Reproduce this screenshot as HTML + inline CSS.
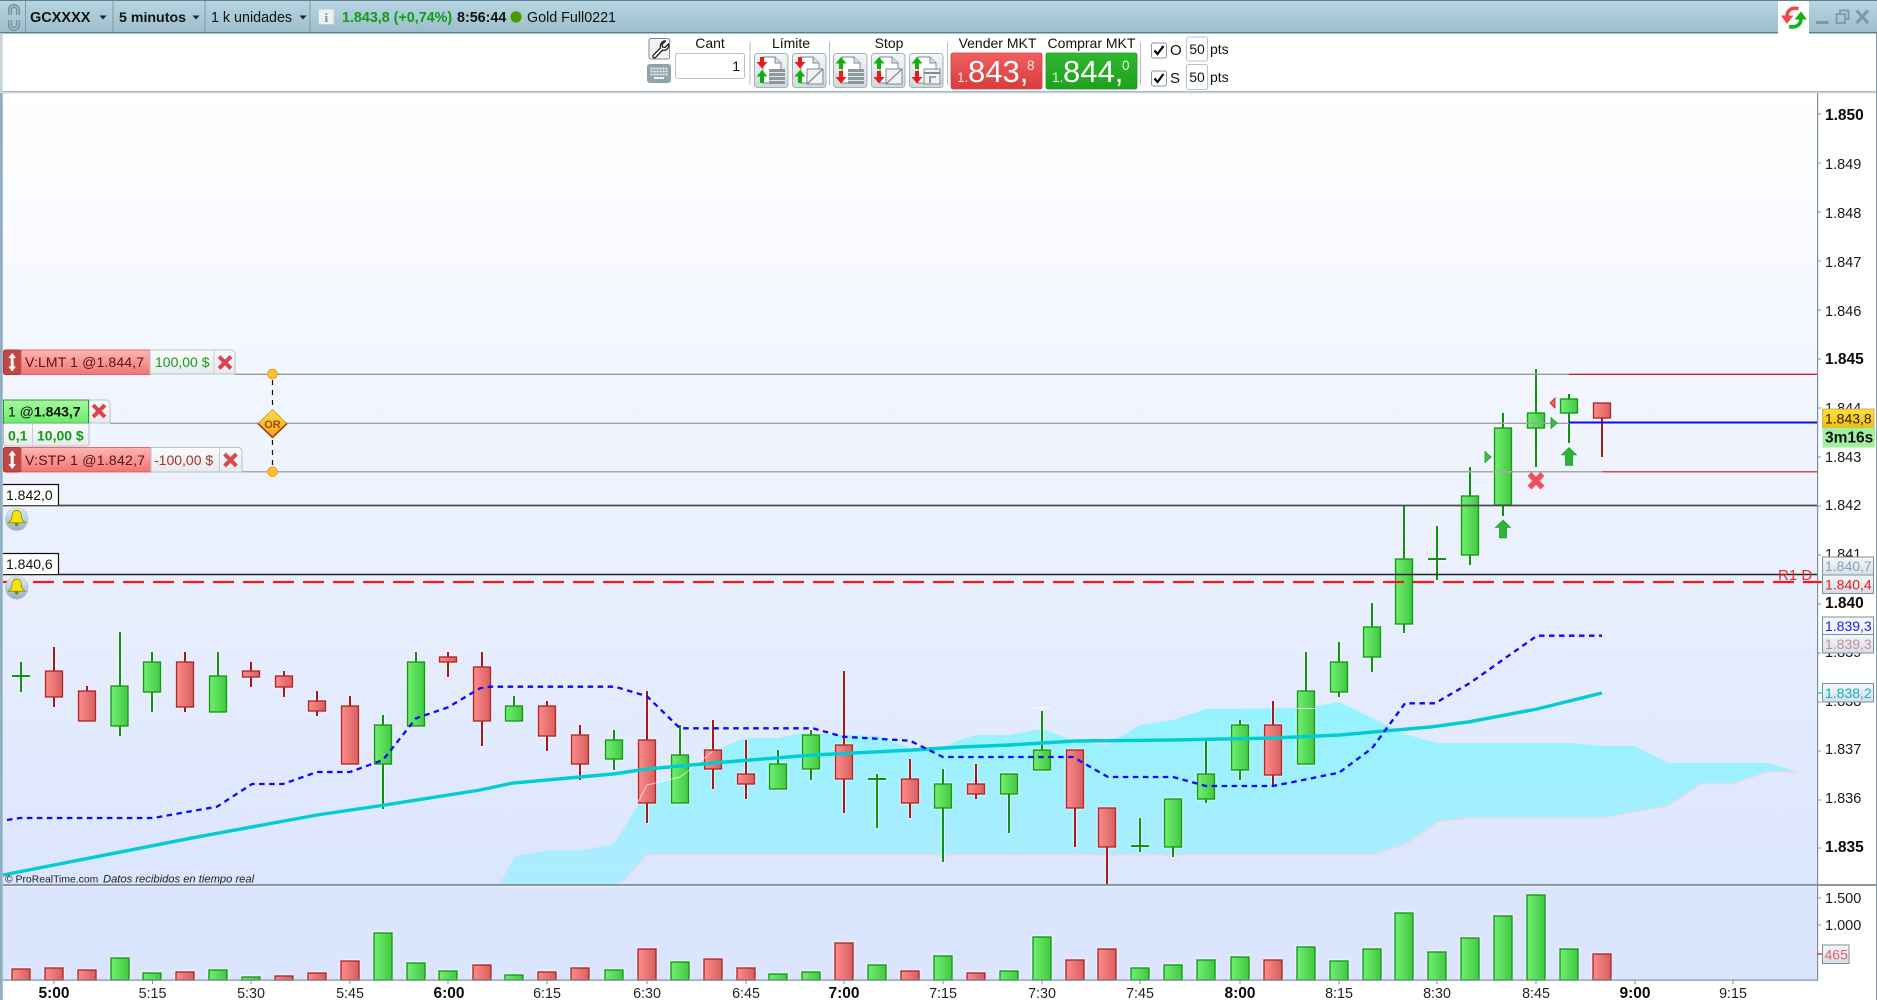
<!DOCTYPE html>
<html lang="es"><head><meta charset="utf-8"><title>GCXXXX</title>
<style>
html,body{margin:0;padding:0;width:1877px;height:1000px;overflow:hidden;background:#fff}
svg{display:block}
text{font-family:"Liberation Sans",sans-serif;font-size:14px;fill:#111}
.b{font-weight:bold}
.c{text-anchor:middle}
.ax{font-size:14.5px;fill:#1a1a1a}
.axb{font-size:15.5px;font-weight:bold;fill:#0a0a0a}
.t{font-size:14.3px;fill:#222;text-anchor:middle}
.tb{font-size:15.5px;font-weight:bold;fill:#0a0a0a;text-anchor:middle}
.h{filter:drop-shadow(0 0 .7px #fff) drop-shadow(0 0 .4px #fff)}
.gw{stroke:#0f930f;stroke-width:2;fill:none}
.rw{stroke:#a91818;stroke-width:2;fill:none}
.gb rect{fill:url(#gg);stroke:#16991a;stroke-width:1.4}
.rb rect{fill:url(#gr);stroke:#aa2c2c;stroke-width:1.4}
</style></head><body>
<svg width="1877" height="1000" viewBox="0 0 1877 1000" xmlns="http://www.w3.org/2000/svg">
<defs>
<linearGradient id="bar" x1="0" y1="0" x2="0" y2="1"><stop offset="0" stop-color="#b8d6e3"/><stop offset="1" stop-color="#9cbdcc"/></linearGradient>
<linearGradient id="bg" x1="0" y1="0" x2="0" y2="1"><stop offset="0" stop-color="#fff"/><stop offset="1" stop-color="#dbe5fe"/></linearGradient>
<linearGradient id="gg" x1="0" y1="0" x2="1" y2="0"><stop offset="0" stop-color="#70f070"/><stop offset="1" stop-color="#42c842"/></linearGradient>
<linearGradient id="gr" x1="0" y1="0" x2="1" y2="0"><stop offset="0" stop-color="#ff8c8c"/><stop offset="1" stop-color="#d65e5e"/></linearGradient>
<linearGradient id="cl" x1="0" y1="0" x2="0" y2="1"><stop offset="0" stop-color="#95f3ff"/><stop offset="1" stop-color="#aeecff"/></linearGradient>
<linearGradient id="tr" x1="0" y1="0" x2="0" y2="1"><stop offset="0" stop-color="#ffb4b4"/><stop offset="1" stop-color="#f07676"/></linearGradient>
<linearGradient id="tg" x1="0" y1="0" x2="0" y2="1"><stop offset="0" stop-color="#a8f7a0"/><stop offset="1" stop-color="#68ec68"/></linearGradient>
<linearGradient id="tw" x1="0" y1="0" x2="0" y2="1"><stop offset="0" stop-color="#fbfcfc"/><stop offset="1" stop-color="#e6eaec"/></linearGradient>
<linearGradient id="btn" x1="0" y1="0" x2="0" y2="1"><stop offset="0" stop-color="#f4f7f8"/><stop offset="1" stop-color="#cfd8dc"/></linearGradient>
<linearGradient id="sell" x1="0" y1="0" x2="0" y2="1"><stop offset="0" stop-color="#ef6060"/><stop offset="1" stop-color="#d83c3c"/></linearGradient>
<linearGradient id="buy" x1="0" y1="0" x2="0" y2="1"><stop offset="0" stop-color="#2fb92f"/><stop offset="1" stop-color="#1fa01f"/></linearGradient>
<linearGradient id="box" x1="0" y1="0" x2="0" y2="1"><stop offset="0" stop-color="#f4f7fb"/><stop offset="1" stop-color="#d6deea"/></linearGradient>
<linearGradient id="yel" x1="0" y1="0" x2="0" y2="1"><stop offset="0" stop-color="#ffdf40"/><stop offset="1" stop-color="#f8bd00"/></linearGradient>
<linearGradient id="dia" x1="0" y1="0" x2="0" y2="1"><stop offset="0" stop-color="#ffe050"/><stop offset="1" stop-color="#f0a010"/></linearGradient>
<linearGradient id="bl" x1="0" y1="0" x2="0" y2="1"><stop offset="0" stop-color="#e2eef6"/><stop offset="1" stop-color="#8eb0c6"/></linearGradient>
<g id="base"><rect x=".5" y=".5" width="33.5" height="34" rx="3" fill="url(#btn)" stroke="#a2b0b8"/><path d="M9 4H21L27 10V30H9Z" fill="#fff" stroke="#7d8a90"/><path d="M21 4V10H27" fill="#dde" stroke="#7d8a90"/></g>
<g id="a1"><polygon points="6,4 10,4 10,9 13.5,9 8,15.5 2.5,9 6,9" fill="#e81c1c"/><polygon points="8,17 13.5,23.5 10,23.5 10,30 6,30 6,23.5 2.5,23.5" fill="#10b010"/></g>
<g id="a2"><polygon points="8,4 13.5,10.5 10,10.5 10,16 6,16 6,10.5 2.5,10.5" fill="#10b010"/><polygon points="6,18 10,18 10,24 13.5,24 8,30.5 2.5,24 6,24" fill="#e81c1c"/></g>
<g id="ls"><rect x="15" y="16" width="16" height="15" fill="#8c989c"/><path d="M15 19.5H31M15 23.5H31M15 27.5H31" stroke="#e4e8ea" stroke-width="1"/></g>
<g id="dg"><rect x="15" y="16" width="16" height="15" fill="#f0f2f3" stroke="#7d8a90"/><path d="M15 31L31 16" stroke="#7d8a90" stroke-width="1.2"/></g>
<g id="trl"><rect x="15" y="16" width="16" height="15" fill="#f0f2f3" stroke="#7d8a90"/><path d="M15 20H31" stroke="#7d8a90" stroke-width="2"/><path d="M21 30V24H27" fill="none" stroke="#7d8a90" stroke-width="1.6"/></g>
<g id="grip"><rect x="3.5" y="0" width="17.5" height="24.5" rx="2" fill="#c24646" stroke="#b03434"/><path d="M12.2 3L16 8H13.7V16.5H16L12.2 21.5L8.4 16.5H10.7V8H8.4Z" fill="#fff"/></g>
<g id="bell"><circle cx="0" cy="0" r="11.3" fill="url(#bl)" stroke="#a8c0d0" stroke-width=".6"/><path d="M0-9c-3.2 0-4.7 2.6-4.7 6 0 3-1.6 5-3.6 6.5H8.300C6.300 2 4.700 0 4.700-3 4.700-6.400 3.200-9 0-9Z" fill="#f4e400" stroke="#9a8c00" stroke-width=".9"/><circle cx="0" cy="5" r="1.7" fill="#8a7a00"/></g>
<g id="ar"><polygon points="0,-9 7.600,-1.500 3.600,-1.500 3.600,9 -3.600,9 -3.600,-1.500 -7.600,-1.500" fill="#2eb43a" stroke="#1c8f28" stroke-width=".6"/></g>
</defs>

<!-- backgrounds -->
<rect width="1877" height="1000" fill="#fff"/>
<rect x="3" y="93" width="1814" height="793" fill="url(#bg)"/>
<rect x="3" y="886" width="1814" height="94" fill="#dbe5fe"/>

<!-- top bar -->
<rect x="0" y="0" width="1877" height="33" fill="url(#bar)"/>
<rect x="0" y="0" width="1877" height="1" fill="#5f7f90"/>
<rect x="0" y="32" width="1877" height="1.500" fill="#5f7f90"/>
<path d="M25.500 1V32M113 1V32M205 1V32M310 1V32" stroke="#7d9cab" stroke-width="1"/>
<path d="M10 15V10a4 4 0 0 1 8 0V15M10 20V25a4 4 0 0 0 8 0V20" fill="none" stroke="#7c919b" stroke-width="4.200"/>
<path d="M10 15V10a4 4 0 0 1 8 0V15M10 20V25a4 4 0 0 0 8 0V20" fill="none" stroke="#b5cdd9" stroke-width="1.100"/>
<text class="b" x="30" y="22" style="font-size:14.5px">GCXXXX</text>
<polygon points="99.500,15.500 106.500,15.500 103,19.500" fill="#222"/>
<text class="b" x="119" y="22" style="font-size:14.2px">5 minutos</text>
<polygon points="192.500,15.500 199.500,15.500 196,19.500" fill="#222"/>
<text x="211" y="22" style="font-size:14.3px">1 k unidades</text>
<polygon points="299.500,15.500 306.500,15.500 303,19.500" fill="#222"/>
<rect x="318.500" y="9" width="15.500" height="15.500" fill="#eef2f3" stroke="#c2cbd0"/>
<text class="b c" x="326.300" y="22" style="font-family:'Liberation Serif',serif;font-size:13px;fill:#7c8a90">i</text>
<text class="b" x="342" y="22" style="font-size:14.3px;fill:#0f9c14">1.843,8 (+0,74%)</text>
<text class="b" x="457" y="22" style="font-size:14.3px">8:56:44</text>
<circle cx="516" cy="17" r="6" fill="#4b9a04" stroke="#a8ccb0" stroke-width=".8"/>
<text x="527" y="22" style="font-size:14.3px">Gold Full0221</text>

<!-- refresh tab + window buttons -->
<rect x="1778" y="1" width="31" height="32.500" fill="#fff"/>
<path d="M1798.500 9C1792.500 6.500 1787 10 1787 16.500" fill="none" stroke="#ee4a4a" stroke-width="3.600"/>
<polygon points="1781,15.500 1793.500,15.500 1787,24" fill="#ee4a4a"/>
<path d="M1789 26.500C1796 28 1801 25 1801 18.500" fill="none" stroke="#12b012" stroke-width="3.600"/>
<polygon points="1794.500,19.500 1807,19.500 1801,11.500" fill="#12b012"/>
<rect x="1816" y="21" width="12.500" height="3" fill="#7e97a3"/>
<path d="M1840 14V10.500H1848.500V19H1845M1836.500 14H1845V23H1836.500Z" fill="none" stroke="#7e97a3" stroke-width="1.800"/>
<path d="M1856.500 10.500L1868 23M1868 10.500L1856.500 23" stroke="#7e97a3" stroke-width="3"/>

<!-- toolbar -->
<rect x="0" y="91" width="1877" height="1.500" fill="#aebcc4"/>
<rect x="0" y="33" width="2.700" height="60" fill="#c8d4da"/>
<rect x="649" y="38.500" width="20.500" height="20.500" rx="2" fill="#f2f4f5" stroke="#7f8c92"/>
<path d="M665.500 41l-3.500 3.500.5 2.500 2.500.5 3.500-3.500c.8 3.500-1.500 7-6 6.200l-7 7.300c-1.500 1.200-3.300-.6-2.300-2.300l7.200-7.200c-.8-4.500 2.600-7.800 5.600-7z" fill="#fff" stroke="#222" stroke-width="1.300"/>
<rect x="647" y="64" width="24" height="19" rx="3" fill="#8ea4ac"/>
<path d="M650.500 68.500h17M650.500 71.500h17M650.500 74.500h17" stroke="#eef2f4" stroke-width="1.800" stroke-dasharray="2 1"/>
<rect x="654" y="77" width="10" height="2" fill="#eef2f4"/>
<text class="c" x="710" y="48">Cant</text>
<rect x="675.500" y="53.500" width="69" height="25" rx="2" fill="#fff" stroke="#b6c3c9"/>
<text x="740" y="71" style="text-anchor:end">1</text>
<path d="M750 42V85M829.500 42V85M947.500 42V85M1140.500 42V85" stroke="#b4bec4" stroke-width="1"/>
<text class="c" x="791" y="48">Límite</text>
<text class="c" x="889" y="48">Stop</text>
<g transform="translate(754 53)"><use href="#base"/><use href="#ls"/><use href="#a1"/></g>
<g transform="translate(792 53)"><use href="#base"/><use href="#dg"/><use href="#a1"/></g>
<g transform="translate(833 53)"><use href="#base"/><use href="#ls"/><use href="#a2"/></g>
<g transform="translate(871 53)"><use href="#base"/><use href="#dg"/><use href="#a2"/></g>
<g transform="translate(909 53)"><use href="#base"/><use href="#trl"/><use href="#a2"/></g>
<text class="c" x="997.500" y="48">Vender MKT</text>
<text class="c" x="1091.500" y="48">Comprar MKT</text>
<rect x="951" y="53" width="91" height="36" rx="2" fill="url(#sell)" stroke="#c84848" stroke-width=".8"/>
<rect x="1046" y="53" width="91" height="36" rx="2" fill="url(#buy)" stroke="#1c9a1c" stroke-width=".8"/>
<text x="957" y="82" style="font-size:13.500px;fill:#ffdcdc">1.</text>
<text x="968" y="82" style="font-size:31px;fill:#fff">843,</text>
<text x="1027" y="70" style="font-size:13.500px;fill:#ffe4e4">8</text>
<text x="1052" y="82" style="font-size:13.500px;fill:#d8f8d8">1.</text>
<text x="1063" y="82" style="font-size:31px;fill:#fff">844,</text>
<text x="1122" y="70" style="font-size:13.500px;fill:#e4ffe4">0</text>
<rect x="1151.500" y="43" width="15" height="15" rx="2" fill="#fff" stroke="#8a98a0"/>
<path d="M1154.500 50.500l3 3.500 6-8" fill="none" stroke="#000" stroke-width="2.200"/>
<rect x="1151.500" y="71" width="15" height="15" rx="2" fill="#fff" stroke="#8a98a0"/>
<path d="M1154.500 78.500l3 3.500 6-8" fill="none" stroke="#000" stroke-width="2.200"/>
<text x="1170" y="55" style="font-size:15px">O</text><text x="1170" y="83" style="font-size:15px">S</text>
<rect x="1186.500" y="37" width="21" height="24" rx="2" fill="#fff" stroke="#b6c3c9"/>
<rect x="1186.500" y="64.500" width="21" height="25" rx="2" fill="#fff" stroke="#b6c3c9"/>
<text class="c" x="1197" y="54">50</text><text class="c" x="1197" y="82">50</text>
<text x="1210" y="54">pts</text><text x="1210" y="82">pts</text>
<rect x="0" y="92.500" width="1877" height="1" fill="#dfe6ea"/>

<!-- ichimoku cloud -->
<polygon fill="url(#cl)" points="499,885 515,856 548,850 582,850 614,844 640,802 647,785 680,777 692,768 713,751 745,738 778,738 803,733 845,735 878,736 910,748 943,747 960,740 976,735 1009,735 1042,729 1075,741 1107,745 1140,725 1173,720 1206,709 1306,708 1339,702 1372,718 1404,734 1437,743 1570,743 1602,746 1635,746 1668,763 1767,763 1799,772 1767,772 1733,784 1701,784 1668,806 1635,812 1602,818 1470,818 1438,822 1430,828 1404,845 1373,855 647,855 620,885"/>
<polyline fill="none" stroke="#f8d4da" stroke-width="1.200" points="620,885 647,855 1373,855 1404,845 1430,828 1438,822 1470,818 1602,818 1635,812 1668,806 1701,784 1733,784 1767,772 1799,772"/>

<!-- candles -->
<g class="h">
<path class="gw" d="M21 662V692M120 632V736M152 652V712M218 652V712M383 715V809M416 652V726M514 696V721M614 730V770M680 725V803M778 750V789M811 730V780M877 774V828M943 769V862M1009 774V833M1042 711V770M1140 818V852M1173 799V857M1206 740V803M1240 720V780M1306 652V764M1339 642V697M1372 603V672M1404 506V633M1437 526V580M1470 467V565M1503 413V516M1536 369V467M1569 394V443M12 676H30M868 779H886M1131 846H1149M1428 559H1446"/>
<path class="rw" d="M54 647V707M87 686V691M185 652V712M251 662V687M284 671V697M317 691V716M350 696V764M448 652V677M482 652V746M547 701V751M580 725V780M647 691V823M713 720V789M746 740V799M844 671V813M910 759V818M976 764V799M1075 750V847M1107 808V885M1273 701V785M1602 403V457"/>
<g class="gb">
<rect x="111" y="686" width="17" height="40"/><rect x="143.500" y="662" width="17" height="30"/><rect x="209.500" y="676" width="17" height="36"/><rect x="374.500" y="725" width="17" height="39"/><rect x="407.500" y="662" width="17" height="64"/><rect x="505.500" y="706" width="17" height="15"/><rect x="605.500" y="740" width="17" height="19"/><rect x="671.500" y="755" width="17" height="48"/><rect x="769.500" y="764" width="17" height="25"/><rect x="802.500" y="735" width="17" height="34"/><rect x="934.500" y="784" width="17" height="24"/><rect x="1000.500" y="774" width="17" height="20"/><rect x="1033.500" y="750" width="17" height="20"/><rect x="1164.500" y="799" width="17" height="48"/><rect x="1197.500" y="774" width="17" height="25"/><rect x="1231.500" y="725" width="17" height="45"/><rect x="1297.500" y="691" width="17" height="73"/><rect x="1330.500" y="662" width="17" height="30"/><rect x="1363.500" y="627" width="17" height="30"/><rect x="1395.500" y="559" width="17" height="65"/><rect x="1461.500" y="496" width="17" height="59"/><rect x="1494.500" y="428" width="17" height="77"/><rect x="1527.500" y="413" width="17" height="15"/><rect x="1560.500" y="399" width="17" height="14"/>
</g>
<g class="rb">
<rect x="45.500" y="671" width="17" height="26"/><rect x="78.500" y="691" width="17" height="30"/><rect x="176.500" y="662" width="17" height="45"/><rect x="242.500" y="671" width="17" height="6"/><rect x="275.500" y="676" width="17" height="11"/><rect x="308.500" y="701" width="17" height="10"/><rect x="341.500" y="706" width="17" height="58"/><rect x="439.500" y="657" width="17" height="5"/><rect x="473.500" y="667" width="17" height="54"/><rect x="538.500" y="706" width="17" height="30"/><rect x="571.500" y="735" width="17" height="29"/><rect x="638.500" y="740" width="17" height="63"/><rect x="704.500" y="750" width="17" height="19"/><rect x="737.500" y="774" width="17" height="10"/><rect x="835.500" y="745" width="17" height="34"/><rect x="901.500" y="779" width="17" height="24"/><rect x="967.500" y="784" width="17" height="10"/><rect x="1066.500" y="750" width="17" height="58"/><rect x="1098.500" y="808" width="17" height="39"/><rect x="1264.500" y="725" width="17" height="50"/><rect x="1593.500" y="403" width="17" height="15"/>
</g>
</g>
<polyline fill="none" stroke="#fff" stroke-opacity=".65" stroke-width="1" points="638,802 647,785 680,777 692,768 713,751"/>
<path d="M1033 708H1051M1297 708.500H1316" stroke="#fff" stroke-opacity=".8" stroke-width="1"/>

<!-- horizontal lines -->
<path d="M235 374.300H1569" stroke="#9a9a9a" stroke-width="1.300"/>
<path d="M1569 374.300H1817" stroke="#c42020" stroke-width="1.300"/>
<path d="M110 423.300H1569" stroke="#a0a0a0" stroke-width="1.300"/>
<path d="M1569 422.500H1817" stroke="#0a0af0" stroke-width="2"/>
<path d="M242 471.800H1602" stroke="#a8a8a8" stroke-width="1.500"/>
<path d="M1602 471.800H1817" stroke="#cc5050" stroke-width="1.500"/>
<path d="M3 505.500H1817" stroke="#4a4a4a" stroke-width="1.800"/>
<path d="M3 574.500H1817" stroke="#222" stroke-width="1.400"/>
<path d="M3 582H1821" stroke="#f01818" stroke-width="2.200" stroke-dasharray="21 9"/>
<text x="1778" y="580" style="font-size:15px;fill:#f02828">R1 D</text>

<!-- MA + dashed -->
<polyline fill="none" stroke="#00cdd2" stroke-width="3.400" points="3,875 117,852.700 190,838.300 317,815 383,805.300 480,790 513,783 613,774 647,769 713,763 813,755 913,750 960,747 1010,745 1075,741 1173,740 1273,738 1340,735 1430,727 1470,721.700 1537,709 1602,693"/>
<polyline fill="none" stroke="#0a0aff" stroke-width="2.300" stroke-dasharray="5.500 4.500" points="7,820 20,818 153,818 217,806.700 252,784 283,784 317,772 350,772 383,760 416,718.300 448,707.300 480,688.300 490,686.700 615,686.700 647,696.300 680,728.300 813,728.300 843,736.700 910,740.700 943,757 1073,757 1108,777 1173,777 1206,786 1273,786 1339,772.700 1372,748.300 1405,703.300 1435,703.300 1470,683 1537,635.700 1602,635.700"/>

<!-- trade markers -->
<polygon points="1485,451.500 1491,457 1485,462.500" fill="#3ec03e" stroke="#1d951d" stroke-width=".8"/>
<polygon points="1551,417.500 1557,423 1551,428.500" fill="#3ec03e" stroke="#1d951d" stroke-width=".8"/>
<polygon points="1555,398 1550,403 1555,408" fill="#f06060" stroke="#c02020" stroke-width=".8"/>
<use href="#ar" transform="translate(1503 529)"/>
<use href="#ar" transform="translate(1569 456.500)"/>
<path d="M1531.500 476L1540.500 485.500M1540.500 476L1531.500 485.500" stroke="#f0505a" stroke-width="5.600" stroke-linecap="square"/>

<!-- order tags -->
<g transform="translate(0 350)"><use href="#grip"/></g>
<rect x="21" y="350" width="129" height="24.500" fill="url(#tr)" stroke="#d85050" stroke-width=".8"/>
<text x="25" y="367" textLength="119" lengthAdjust="spacing" style="fill:#5a1212">V:LMT 1 @1.844,7</text>
<path d="M150 350H231a4 4 0 0 1 4 4V374H150Z" fill="url(#tw)" stroke="#b4c4cc"/>
<path d="M214 350V374" stroke="#c4d0d6"/>
<text x="155" y="367" style="fill:#1c981c">100,00 $</text>
<path d="M220.500 358L229.500 367M229.500 358L220.500 367" stroke="#dd4450" stroke-width="4" stroke-linecap="square"/>

<path d="M89 400H106a4 4 0 0 1 4 4V423H89Z" fill="url(#tw)" stroke="#b4c4cc"/>
<rect x="3.500" y="400" width="85" height="23.300" fill="url(#tg)" stroke="#2b9b2b"/>
<text x="8" y="416.500" class="b" style="font-size:14px"><tspan style="font-weight:normal">1 @</tspan>1.843,7</text>
<path d="M94.500 406.500L103.500 415.500M103.500 406.500L94.500 415.500" stroke="#dd4450" stroke-width="4" stroke-linecap="square"/>
<rect x="3.500" y="423.500" width="85.500" height="22.500" rx="2" fill="url(#tw)" stroke="#b4c4cc"/>
<path d="M32.500 424V445" stroke="#c4d0d6"/>
<text x="8" y="440.500" class="b" style="fill:#1a9a1a">0,1</text>
<text x="37" y="440.500" class="b" style="fill:#1a9a1a">10,00 $</text>

<g transform="translate(0 447.500)"><use href="#grip"/></g>
<rect x="21" y="447.500" width="130" height="24.500" fill="url(#tr)" stroke="#d85050" stroke-width=".8"/>
<text x="25" y="465" textLength="120" lengthAdjust="spacing" style="fill:#5a1212">V:STP 1 @1.842,7</text>
<path d="M151 447.500H238a4 4 0 0 1 4 4V472H151Z" fill="url(#tw)" stroke="#b4c4cc"/>
<path d="M219.500 448V472" stroke="#c4d0d6"/>
<text x="154" y="465" style="fill:#a8302c">-100,00 $</text>
<path d="M226 455.500L235 464.500M235 455.500L226 464.500" stroke="#dd4450" stroke-width="4" stroke-linecap="square"/>

<!-- OR connector -->
<path d="M272.500 380V466" stroke="#111" stroke-width="1.200" stroke-dasharray="5 5"/>
<circle cx="272.500" cy="374" r="4.800" fill="#fcc030" stroke="#e8a020"/>
<circle cx="272.500" cy="471.800" r="4.800" fill="#fcc030" stroke="#e8a020"/>
<polygon points="272.500,409.500 287,423.500 272.500,437.500 258,423.500" fill="url(#dia)" stroke="#c88010" stroke-width=".6"/>
<path d="M258 423.500L272.500 437.500L287 423.500" fill="none" stroke="#a04810" stroke-width="1.600"/>
<text class="b c" x="272.500" y="428" style="font-size:11px;fill:#a04810">OR</text>

<!-- alert labels -->
<path d="M3 484.500H58.500V505H3Z" fill="#fff"/><path d="M3 484.500H58.500V505" fill="none" stroke="#111" stroke-width="1.200"/>
<text x="6" y="500">1.842,0</text>
<use href="#bell" transform="translate(16.700 519.300)"/>
<path d="M3 553.500H58.500V574H3Z" fill="#fff"/><path d="M3 553.500H58.500V574" fill="none" stroke="#111" stroke-width="1.200"/>
<text x="6" y="569">1.840,6</text>
<use href="#bell" transform="translate(16.700 587.800)"/>

<text x="5" y="882.500" style="font-size:10.400px;fill:#222">© ProRealTime.com</text>
<text x="103" y="882.500" style="font-size:11.200px;font-style:italic;fill:#222">Datos recibidos en tiempo real</text>

<!-- volume -->
<rect x="3" y="884" width="1874" height="2" fill="#8a98a6"/>
<rect x="3" y="886" width="1814" height="1" fill="#eef2fb"/>
<g class="h">
<g class="rb">
<rect x="12" y="969" width="18" height="11"/><rect x="45" y="968" width="18" height="12"/><rect x="78" y="970" width="18" height="10"/><rect x="176" y="972" width="18" height="8"/><rect x="275" y="976" width="18" height="4"/><rect x="308" y="973" width="18" height="7"/><rect x="341" y="961" width="18" height="19"/><rect x="473" y="965" width="18" height="15"/><rect x="538" y="972" width="18" height="8"/><rect x="571" y="968" width="18" height="12"/><rect x="638" y="949" width="18" height="31"/><rect x="704" y="959" width="18" height="21"/><rect x="737" y="968" width="18" height="12"/><rect x="835" y="943" width="18" height="37"/><rect x="901" y="971" width="18" height="9"/><rect x="967" y="973" width="18" height="7"/><rect x="1066" y="960" width="18" height="20"/><rect x="1098" y="949" width="18" height="31"/><rect x="1264" y="960" width="18" height="20"/><rect x="1593" y="954" width="18" height="26"/>
</g>
<g class="gb">
<rect x="111" y="958" width="18" height="22"/><rect x="143" y="973" width="18" height="7"/><rect x="209" y="970" width="18" height="10"/><rect x="242" y="977" width="18" height="3"/><rect x="374" y="933" width="18" height="47"/><rect x="407" y="963" width="18" height="17"/><rect x="439" y="971" width="18" height="9"/><rect x="505" y="975" width="18" height="5"/><rect x="605" y="970" width="18" height="10"/><rect x="671" y="962" width="18" height="18"/><rect x="769" y="974" width="18" height="6"/><rect x="802" y="972" width="18" height="8"/><rect x="868" y="965" width="18" height="15"/><rect x="934" y="956" width="18" height="24"/><rect x="1000" y="971" width="18" height="9"/><rect x="1033" y="937" width="18" height="43"/><rect x="1131" y="968" width="18" height="12"/><rect x="1164" y="965" width="18" height="15"/><rect x="1197" y="960" width="18" height="20"/><rect x="1231" y="957" width="18" height="23"/><rect x="1297" y="947" width="18" height="33"/><rect x="1330" y="961" width="18" height="19"/><rect x="1363" y="949" width="18" height="31"/><rect x="1395" y="913" width="18" height="67"/><rect x="1428" y="952" width="18" height="28"/><rect x="1461" y="938" width="18" height="42"/><rect x="1494" y="916" width="18" height="64"/><rect x="1527" y="895" width="18" height="85"/><rect x="1560" y="949" width="18" height="31"/>
</g>
</g>

<!-- frame -->
<rect x="3" y="979.500" width="1815" height="1.200" fill="#7a929e"/>
<rect x="1817" y="93" width="1.200" height="888" fill="#7a929e"/>
<rect x="0" y="93" width="2.800" height="907" fill="#8fb0c2"/>
<rect x="1876" y="33" width="1" height="967" fill="#7e9aa8"/>

<!-- time axis -->
<path d="M54 980V984M152.500 980V984M251 980V984M350 980V984M448 980V984M547 980V984M647 980V984M746 980V984M844 980V984M943 980V984M1042 980V984M1140 980V984M1240 980V984M1339 980V984M1437 980V984M1536 980V984M1635 980V984M1733 980V984" stroke="#7a929e"/>
<text class="tb" x="54" y="998">5:00</text><text class="t" x="152.500" y="998">5:15</text><text class="t" x="251" y="998">5:30</text><text class="t" x="350" y="998">5:45</text><text class="tb" x="449" y="998">6:00</text><text class="t" x="547" y="998">6:15</text><text class="t" x="647" y="998">6:30</text><text class="t" x="746" y="998">6:45</text><text class="tb" x="844" y="998">7:00</text><text class="t" x="943" y="998">7:15</text><text class="t" x="1042" y="998">7:30</text><text class="t" x="1140" y="998">7:45</text><text class="tb" x="1240" y="998">8:00</text><text class="t" x="1339" y="998">8:15</text><text class="t" x="1437" y="998">8:30</text><text class="t" x="1536" y="998">8:45</text><text class="tb" x="1635" y="998">9:00</text><text class="t" x="1733" y="998">9:15</text>

<!-- price axis -->
<path d="M1817 114H1821M1817 163H1821M1817 212H1821M1817 261H1821M1817 310H1821M1817 359H1821M1817 408H1821M1817 457H1821M1817 506H1821M1817 555H1821M1817 604H1821M1817 653H1821M1817 702H1821M1817 751H1821M1817 800H1821M1817 848H1821M1817 898H1821M1817 925H1821" stroke="#7a929e"/>
<text class="axb" x="1825" y="120">1.850</text>
<text class="ax" x="1825" y="169">1.849</text>
<text class="ax" x="1825" y="218">1.848</text>
<text class="ax" x="1825" y="267">1.847</text>
<text class="ax" x="1825" y="316">1.846</text>
<text class="axb" x="1825" y="364">1.845</text>
<text class="ax" x="1825" y="413">1.844</text>
<text class="ax" x="1825" y="462">1.843</text>
<text class="ax" x="1825" y="510">1.842</text>
<text class="ax" x="1825" y="559">1.841</text>
<text class="axb" x="1825" y="608">1.840</text>
<text class="ax" x="1825" y="657">1.839</text>
<text class="ax" x="1825" y="706">1.838</text>
<text class="ax" x="1825" y="754">1.837</text>
<text class="ax" x="1825" y="803">1.836</text>
<text class="axb" x="1825" y="852">1.835</text>
<text class="ax" x="1825" y="903">1.500</text>
<text class="ax" x="1825" y="930">1.000</text>

<rect x="1822.500" y="409" width="51.500" height="18.500" fill="url(#yel)" stroke="#b8a468" stroke-width=".8"/>
<text x="1825" y="423.500" style="fill:#222">1.843,8</text>
<rect x="1822.500" y="427.500" width="52.500" height="20" fill="#9ff09f"/>
<text class="b" x="1825" y="442.500" style="font-size:15.500px">3m16s</text>
<rect x="1822.500" y="557" width="51" height="18" fill="url(#box)" stroke="#7a929e"/>
<text x="1825" y="571" style="fill:#7fa5b0">1.840,7</text>
<rect x="1822.500" y="575" width="51" height="18.500" fill="url(#box)" stroke="#7a929e"/>
<text x="1825" y="589.500" style="fill:#f01818">1.840,4</text>
<path d="M1817 582H1822" stroke="#f01818" stroke-width="1.500"/>
<rect x="1822.500" y="617" width="51" height="17.500" fill="#f4f7fc" stroke="#7a929e"/>
<text x="1825" y="631" style="fill:#1a1af0">1.839,3</text>
<rect x="1822.500" y="634.500" width="51" height="18.500" fill="url(#box)" stroke="#7a929e"/>
<text x="1825" y="649" style="fill:#c89090">1.839,3</text>
<rect x="1822.500" y="683.500" width="51" height="18.500" fill="url(#box)" stroke="#7a929e"/>
<text x="1825" y="698" style="fill:#10b4b8">1.838,2</text>
<path d="M1817 693H1822" stroke="#00cdd2" stroke-width="1.300"/>
<rect x="1822.500" y="945" width="26.500" height="18.500" fill="url(#box)" stroke="#7a929e"/>
<text x="1824.500" y="959.500" style="fill:#e8606a">465</text>
<path d="M1817 954H1822" stroke="#d84848" stroke-width="1.500"/>
</svg>
</body></html>
